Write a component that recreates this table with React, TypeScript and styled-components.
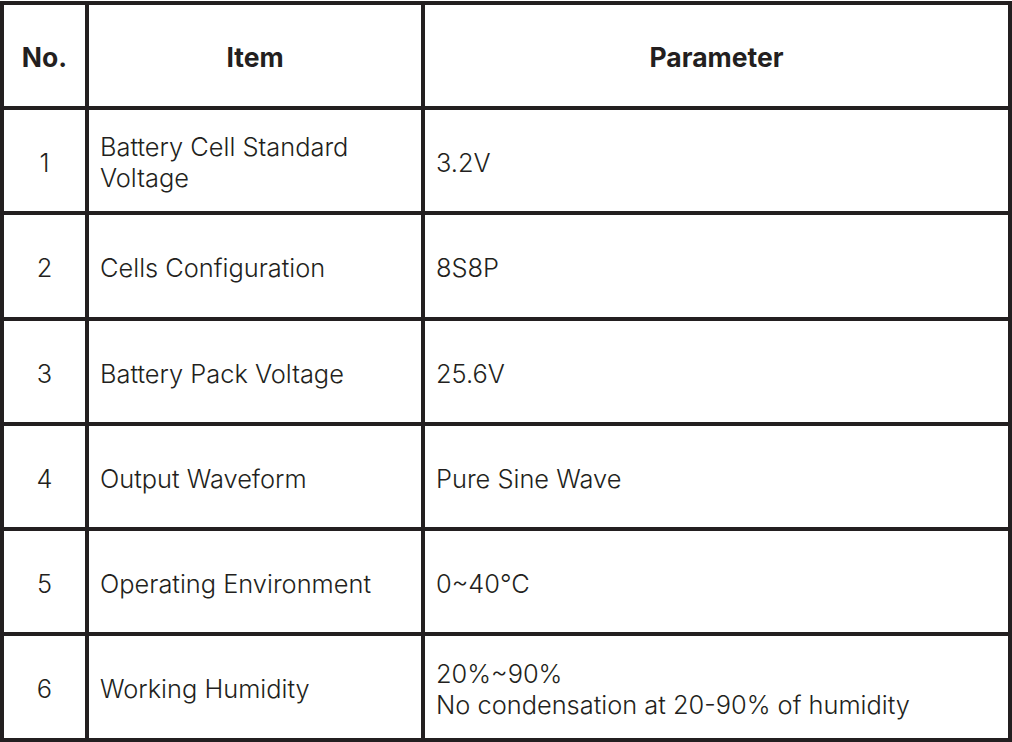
import React from 'react'
import styled, { createGlobalStyle } from 'styled-components'

const rows = [
  { no: '1', item: ['Battery Cell Standard', 'Voltage'], value: ['3.2V'] },
  { no: '2', item: ['Cells Configuration'], value: ['8S8P'] },
  { no: '3', item: ['Battery Pack Voltage'], value: ['25.6V'] },
  { no: '4', item: ['Output Waveform'], value: ['Pure Sine Wave'] },
  { no: '5', item: ['Operating Environment'], value: ['0~40°C'] },
  { no: '6', item: ['Working Humidity'], value: ['20%~90%', 'No condensation at 20-90% of humidity'] },
]

export default function App() {
  return (
    <>
      <GlobalStyle />
      <Table>
        <HeadCell>No.</HeadCell>
        <HeadCell>Item</HeadCell>
        <HeadCell>Parameter</HeadCell>
        {rows.map((row) => (
          <React.Fragment key={row.no}>
            <NumberCell>{row.no}</NumberCell>
            <TextCell>
              {row.item.map((line) => (
                <Line key={line}>{line}</Line>
              ))}
            </TextCell>
            <TextCell>
              {row.value.map((line) => (
                <Line key={line}>{line}</Line>
              ))}
            </TextCell>
          </React.Fragment>
        ))}
      </Table>
    </>
  )
}

const GlobalStyle = createGlobalStyle`
  body {
    margin: 0;
    background: #ffffff;
    font-family: Inter, "Open Sans", sans-serif;
  }
`

const Table = styled.div`
  display: grid;
  grid-template-columns: 81px 332px 583px;
  grid-template-rows: 101px 101px 102px 101px 101px 101px 102px;
  gap: 4px;
  padding: 4px;
  margin-top: 1px;
  width: 1012px;
  box-sizing: border-box;
  background: #231f20;
`

const Cell = styled.div`
  display: flex;
  flex-direction: column;
  justify-content: center;
  padding-top: 3px;
  box-sizing: border-box;
  background: #ffffff;
  color: #231f20;
  font-size: 25.4px;
`

const HeadCell = styled(Cell)`
  align-items: center;
  font-size: 26.5px;
  font-weight: 700;
`

const NumberCell = styled(Cell)`
  align-items: center;
  font-weight: 300;
`

const TextCell = styled(Cell)`
  padding-left: 11px;
  padding-right: 11px;
  font-weight: 300;
`

const Line = styled.div`
  line-height: 31px;
`
